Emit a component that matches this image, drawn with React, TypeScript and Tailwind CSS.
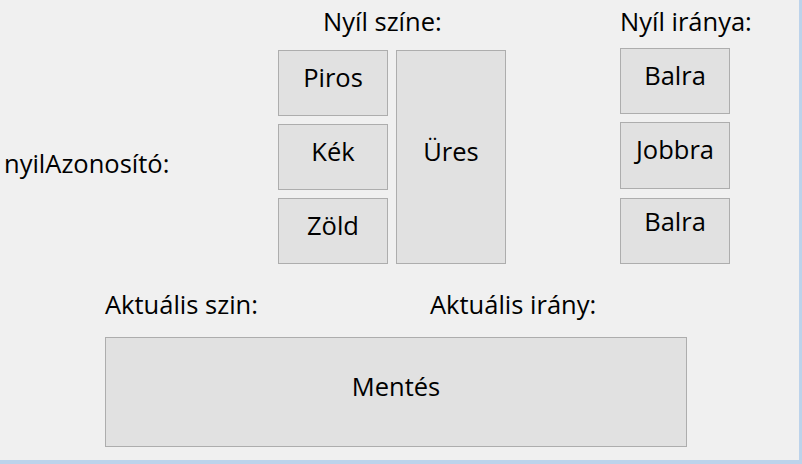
import React from "react";

function Btn({
  label,
  h,
  pb = "pb-[12px]",
  w = "w-[110px]",
}: {
  label: string;
  h: string;
  pb?: string;
  w?: string;
}) {
  return (
    <div
      className={`${w} ${h} ${pb} flex items-center justify-center border border-[#adadad] bg-[#e1e1e1] text-black`}
    >
      {label}
    </div>
  );
}

export default function App() {
  return (
    <div className="w-[802px] h-[464px] bg-[#bcd3eb] font-['Open_Sans',sans-serif] text-[25.5px] leading-[32px] text-black">
      <div className="w-[799px] h-[460px] bg-[#f0f0f0] flex flex-col">
        <div className="flex items-start">
          <div className="w-[278px] pl-[4px] pt-[147px] whitespace-nowrap">nyilAzonosító:</div>
          <div className="w-[228px] flex flex-col">
            <div className="h-[50px] pt-[5px] pl-[45px] whitespace-nowrap">Nyíl színe:</div>
            <div className="flex gap-[8px]">
              <div className="flex flex-col gap-[8px]">
                <Btn label="Piros" h="h-[66px]" />
                <Btn label="Kék" h="h-[66px]" />
                <Btn label="Zöld" h="h-[66px]" />
              </div>
              <Btn label="Üres" h="h-[214px]" />
            </div>
          </div>
          <div className="ml-[114px] w-[110px] flex flex-col">
            <div className="h-[48px] pt-[5px] whitespace-nowrap">Nyíl iránya:</div>
            <div className="flex flex-col">
              <Btn label="Balra" h="h-[66px]" />
              <div className="h-[8px]" />
              <Btn label="Jobbra" h="h-[67px]" pb="pb-[14px]" />
              <div className="h-[9px]" />
              <Btn label="Balra" h="h-[66px]" pb="pb-[21px]" />
            </div>
          </div>
        </div>
        <div className="flex mt-[24px]">
          <div className="pl-[105px] w-[430px] whitespace-nowrap">Aktuális szin:</div>
          <div className="whitespace-nowrap">Aktuális irány:</div>
        </div>
        <div className="mt-[17px] pl-[105px]">
          <Btn label="Mentés" h="h-[110px]" w="w-[582px]" />
        </div>
      </div>
    </div>
  );
}
